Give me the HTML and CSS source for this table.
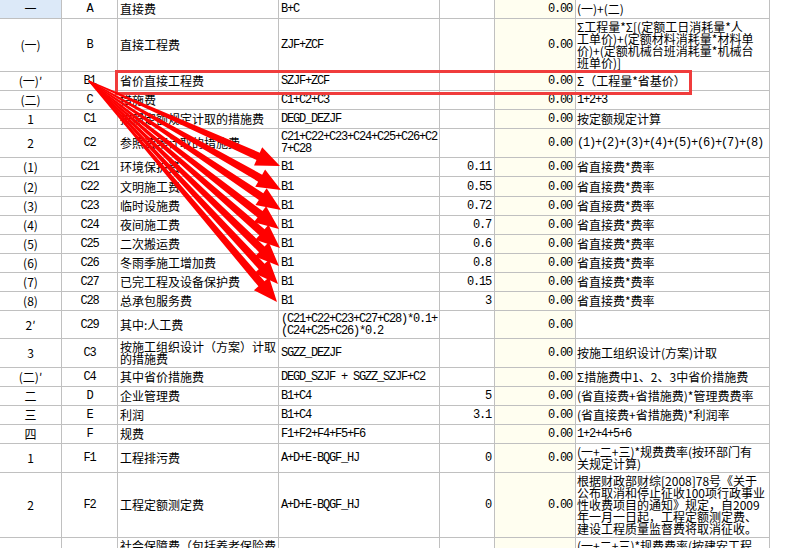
FILE: index.html
```html
<!DOCTYPE html>
<html lang="zh-CN">
<head>
<meta charset="utf-8">
<title>费用汇总</title>
<link rel="stylesheet" href="styles.css">
</head>
<body>
<div class="page">
  <div class="sheet">
    <div class="sel">一</div><div>A</div><div>直接费</div><div>B+C</div><div></div><div>0.00</div><div>(一)+(二)</div>
    <div>(一)</div><div>B</div><div>直接工程费</div><div>ZJF+ZCF</div><div></div><div>0.00</div><div><div class="t">Σ工程量*Σ[(定额工日消耗量*人<br>工单价)+(定额材料消耗量*材料单<br>价)+(定额机械台班消耗量*机械台<br>班单价)]</div></div>
    <div>(一)′</div><div>B1</div><div>省价直接工程费</div><div>SZJF+ZCF</div><div></div><div>0.00</div><div>Σ（工程量*省基价）</div>
    <div>(二)</div><div>C</div><div>措施费</div><div>C1+C2+C3</div><div></div><div>0.00</div><div><span class="m">1+2+3</span></div>
    <div>1</div><div>C1</div><div>按照定额规定计取的措施费</div><div>DEGD_DEZJF</div><div></div><div>0.00</div><div>按定额规定计算</div>
    <div>2</div><div>C2</div><div>参照费率计取的措施费</div><div><div class="t">C21+C22+C23+C24+C25+C26+C2<br>7+C28</div></div><div></div><div>0.00</div><div><span class="m">(1)+(2)+(3)+(4)+(5)+(6)+(7)+(8)</span></div>
    <div>(1)</div><div>C21</div><div>环境保护费</div><div>B1</div><div>0.11</div><div>0.00</div><div>省直接费*费率</div>
    <div>(2)</div><div>C22</div><div>文明施工费</div><div>B1</div><div>0.55</div><div>0.00</div><div>省直接费*费率</div>
    <div>(3)</div><div>C23</div><div>临时设施费</div><div>B1</div><div>0.72</div><div>0.00</div><div>省直接费*费率</div>
    <div>(4)</div><div>C24</div><div>夜间施工费</div><div>B1</div><div>0.7</div><div>0.00</div><div>省直接费*费率</div>
    <div>(5)</div><div>C25</div><div>二次搬运费</div><div>B1</div><div>0.6</div><div>0.00</div><div>省直接费*费率</div>
    <div>(6)</div><div>C26</div><div>冬雨季施工增加费</div><div>B1</div><div>0.8</div><div>0.00</div><div>省直接费*费率</div>
    <div>(7)</div><div>C27</div><div>已完工程及设备保护费</div><div>B1</div><div>0.15</div><div>0.00</div><div>省直接费*费率</div>
    <div>(8)</div><div>C28</div><div>总承包服务费</div><div>B1</div><div>3</div><div>0.00</div><div>省直接费*费率</div>
    <div>2′</div><div>C29</div><div>其中:人工费</div><div><div class="t">(C21+C22+C23+C27+C28)*0.1+<br>(C24+C25+C26)*0.2</div></div><div></div><div>0.00</div><div></div>
    <div>3</div><div>C3</div><div><div class="t">按施工组织设计（方案）计取<br>的措施费</div></div><div>SGZZ_DEZJF</div><div></div><div>0.00</div><div>按施工组织设计(方案)计取</div>
    <div>(二)′</div><div>C4</div><div>其中省价措施费</div><div>DEGD_SZJF + SGZZ_SZJF+C2</div><div></div><div>0.00</div><div>Σ措施费中1、2、3中省价措施费</div>
    <div>二</div><div>D</div><div>企业管理费</div><div>B1+C4</div><div>5</div><div>0.00</div><div>(省直接费+省措施费)*管理费费率</div>
    <div>三</div><div>E</div><div>利润</div><div>B1+C4</div><div>3.1</div><div>0.00</div><div>(省直接费+省措施费)*利润率</div>
    <div>四</div><div>F</div><div>规费</div><div>F1+F2+F4+F5+F6</div><div></div><div>0.00</div><div><span class="m">1+2+4+5+6</span></div>
    <div>1</div><div>F1</div><div>工程排污费</div><div>A+D+E-BQGF_HJ</div><div>0</div><div>0.00</div><div><div class="t">(一+二+三)*规费费率(按环部门有<br>关规定计算)</div></div>
    <div>2</div><div>F2</div><div>工程定额测定费</div><div>A+D+E-BQGF_HJ</div><div>0</div><div>0.00</div><div><div class="t">根据财政部财综[2008]78号《关于<br>公布取消和停止征收100项行政事业<br>性收费项目的通知》规定，自2009<br>年一月一日起，工程定额测定费、<br>建设工程质量监督费将取消征收。</div></div>
    <div class="top"></div><div class="top"></div><div class="top">社会保障费（包括养老保险费</div><div class="top"></div><div class="top"></div><div class="top"></div><div class="top">(一+二+三)*规费费率(按建安工程</div>
  </div>

  <div class="mark"></div>

  <svg class="arrows" width="792" height="548" viewBox="0 0 792 548" aria-hidden="true">
    <g fill="#ff0000">
      <polygon transform="translate(89 81) rotate(24.0)" points="0,-0.6 185.1,-4 185.1,-10 209.1,0 185.1,10 185.1,4 0,0.6"/>
      <polygon transform="translate(89 81) rotate(29.58)" points="0,-0.6 196.8,-4 196.8,-10 220.8,0 196.8,10 196.8,4 0,0.6"/>
      <polygon transform="translate(89 81) rotate(33.9)" points="0,-0.6 207.3,-4 207.3,-10 231.3,0 207.3,10 207.3,4 0,0.6"/>
      <polygon transform="translate(89 81) rotate(37.92)" points="0,-0.6 216.8,-4 216.8,-10 240.8,0 216.8,10 216.8,4 0,0.6"/>
      <polygon transform="translate(89 81) rotate(41.16)" points="0,-0.6 229.7,-4 229.7,-10 253.7,0 229.7,10 229.7,4 0,0.6"/>
      <polygon transform="translate(89 81) rotate(44.24)" points="0,-0.6 241.2,-4 241.2,-10 265.2,0 241.2,10 241.2,4 0,0.6"/>
      <polygon transform="translate(89 81) rotate(47.05)" points="0,-0.6 253.4,-4 253.4,-10 277.4,0 253.4,10 253.4,4 0,0.6"/>
      <polygon transform="translate(89 81) rotate(49.62)" points="0,-0.6 266.2,-4 266.2,-10 290.2,0 266.2,10 266.2,4 0,0.6"/>
    </g>
  </svg>
</div>
</body>
</html>
```

FILE: styles.css
```css
* { box-sizing: border-box; }
html, body { margin: 0; padding: 0; }
body {
  width: 792px;
  height: 548px;
  overflow: hidden;
  background: #ffffff;
  color: #000000;
  font-family: "Noto Sans CJK SC", "Noto Sans CJK JP", sans-serif;
  font-size: 12px;
}
.page {
  position: relative;
  width: 792px;
  height: 548px;
  overflow: hidden;
}
.sheet {
  display: grid;
  width: 770px;
  grid-template-columns: 62px 56px 161px 161px 55px 81px 194px;
  grid-template-rows: 19px 53px 19px 19px 19px 29px 19px 20px 19px 19px 19px 19px 19px 19px 28px 29px 19px 19px 19px 19px 29px 65px 40px;
}
.sheet > div {
  display: flex;
  align-items: center;
  overflow: hidden;
  white-space: nowrap;
  line-height: 12px;
  border-right: 1px solid #c0c0c0;
  border-bottom: 1px solid #c0c0c0;
}
.sheet > div:nth-child(7n+1),
.sheet > div:nth-child(7n+2) {
  justify-content: center;
}
.sheet > div:nth-child(7n+2),
.sheet > div:nth-child(7n+4),
.sheet > div:nth-child(7n+5),
.sheet > div:nth-child(7n+6),
.m {
  font-family: "Liberation Mono", monospace;
  font-size: 12px;
  letter-spacing: -1.2px;
}
.sheet > div:nth-child(7n+3),
.sheet > div:nth-child(7n+4) {
  padding-left: 2px;
}
.sheet > div:nth-child(7n+5),
.sheet > div:nth-child(7n+6) {
  justify-content: flex-end;
  padding-right: 3px;
}
.sheet > div:nth-child(7n+6) {
  background: #fffef0;
}
.sheet > div:nth-child(7n) {
  padding-left: 1px;
}
.sheet > div.sel {
  background: #dce9f8;
}
.sheet > div.top {
  align-items: flex-start;
  padding-top: 2px;
}
.t {
  line-height: 12px;
  white-space: nowrap;
}
.mark {
  position: absolute;
  left: 115px;
  top: 70px;
  width: 577px;
  height: 25px;
  border: 3px solid #f03c3c;
}
.arrows {
  position: absolute;
  left: 0;
  top: 0;
  pointer-events: none;
}
```
